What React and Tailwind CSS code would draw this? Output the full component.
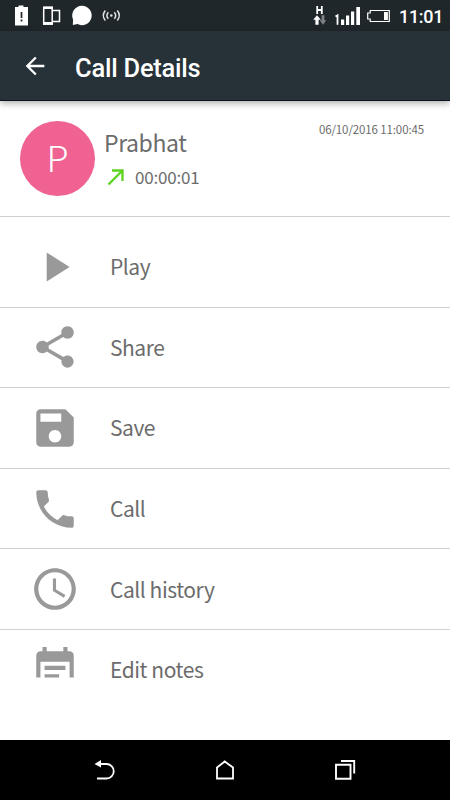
import clsx from 'clsx';

const actions = [
  { label: 'Play', path: 'M8 5v14l11-7z' },
  {
    label: 'Share',
    path: 'M18 16.08c-.76 0-1.44.3-1.96.77L8.91 12.7c.05-.23.09-.46.09-.7s-.04-.47-.09-.7l7.05-4.11c.54.5 1.25.81 2.04.81 1.66 0 3-1.34 3-3s-1.34-3-3-3-3 1.34-3 3c0 .24.04.47.09.7L8.04 9.81C7.5 9.31 6.79 9 6 9c-1.66 0-3 1.34-3 3s1.34 3 3 3c.79 0 1.5-.31 2.04-.81l7.12 4.16c-.05.21-.08.43-.08.65 0 1.61 1.31 2.92 2.92 2.92s2.92-1.31 2.92-2.92-1.31-2.92-2.92-2.92z',
  },
  {
    label: 'Save',
    path: 'M17 3H5c-1.11 0-2 .9-2 2v14c0 1.1.89 2 2 2h14c1.1 0 2-.9 2-2V7l-4-4zm-5 16c-1.66 0-3-1.34-3-3s1.34-3 3-3 3 1.34 3 3-1.34 3-3 3zm3-10H5V5h10v4z',
  },
  {
    label: 'Call',
    path: 'M6.62 10.79c1.44 2.83 3.76 5.14 6.59 6.59l2.2-2.2c.27-.27.67-.36 1.02-.24 1.12.37 2.33.57 3.57.57.55 0 1 .45 1 1V20c0 .55-.45 1-1 1-9.39 0-17-7.61-17-17 0-.55.45-1 1-1h3.5c.55 0 1 .45 1 1 0 1.25.2 2.45.57 3.57.11.35.03.74-.25 1.02l-2.2 2.2z',
  },
  {
    label: 'Call history',
    path: 'M11.99 2C6.47 2 2 6.48 2 12s4.47 10 9.99 10C17.52 22 22 17.52 22 12S17.52 2 11.99 2zM12 20c-4.42 0-8-3.58-8-8s3.58-8 8-8 8 3.58 8 8-3.58 8-8 8zm.5-13H11v6l5.25 3.15.75-1.23-4.5-2.67z',
  },
  {
    label: 'Edit notes',
    path: 'M5 15.6H3V5c0-1.1.9-2 2-2h1V1h2v2h8V1h2v2h1c1.1 0 2 .9 2 2v10.6h-2V8H5zM7 10h10v2H7zM7 14h7v1.6H7z',
  },
];

function StatusBar() {
  return (
    <div className="flex h-[31px] items-center justify-between bg-[#20272b] pl-[14px] pr-[7px] text-white">
      <div className="flex h-full items-center">
        <svg width="110" height="31" viewBox="0 0 110 31">
          <path d="M1 7h3.500V5.500h5V7H14v18.500H1z" fill="white" />
          <path d="M7.500 12v6M7.500 19.500v2" stroke="#20272b" strokeWidth="1.700" />
          <path d="M29.700 7.500h8.500V10M38.200 22v2h-8.500V7" fill="none" stroke="white" strokeWidth="1.500" />
          <path d="M29 6.500h10v2.500h-10zM29 22h10v2.800h-10z" fill="white" />
          <path d="M38.200 10.500h7.300v11h-7.300z" fill="#20272b" stroke="white" strokeWidth="1.500" />
          <path d="M68 5.800a9.700 9.700 0 1 1-4.500 18.300l-4.700.9.300-5.300A9.700 9.700 0 0 1 68 5.800z" fill="white" />
          <g fill="none" stroke="#e2e4e5" strokeWidth="1.500">
            <path d="M91.300 10.500q-4 5 0 10M94.300 12.200q-2.800 3.300 0 6.600M103.300 10.500q4 5 0 10M100.300 12.200q2.800 3.300 0 6.600" />
          </g>
          <circle cx="97.300" cy="15.500" r="1.300" fill="#e2e4e5" />
        </svg>
      </div>
      <div className="flex h-full items-center gap-[9px]">
        <svg width="79" height="31" viewBox="312 0 79 31">
          <path d="M318.200 6v8M322.800 6v8M318.200 10h4.600" fill="none" stroke="white" strokeWidth="1.800" />
          <path d="M318 15.200l3.800 4.500h-2.200v5h-3.200v-5h-2.200z" fill="white" />
          <path d="M324 24.700l3.300-4.500h-1.900v-5h-2.800v5h-1.900z" fill="#7c8285" />
          <path d="M336.500 16.500l2-1.200v9.500" fill="none" stroke="white" strokeWidth="1.800" />
          <path d="M342 19.500h3.200V25H342zM347 15.500h3.200V25H347zM352 11.500h3.200V25H352zM357.300 7h3.700v18h-3.700z" fill="white" />
          <path d="M371.200 10.500h19.100v11h-19.100v-2.500h-2.500v-6h2.500z" fill="none" stroke="white" strokeWidth="1.200" />
          <path d="M385 12h3.900v8H385z" fill="white" />
        </svg>
        <span className="w-[44px] whitespace-nowrap pt-[2px] text-[18px] font-medium leading-[31px] tracking-[-0.300px]">11:01</span>
      </div>
    </div>
  );
}

function AppBar() {
  return (
    <div className="relative z-10 flex h-[70px] items-center border-b border-[#10131f] bg-[#263238] pl-[21px] text-white shadow-[0_2px_7px_rgba(0,0,0,0.35)]">
      <svg width="28" height="28" viewBox="0 0 24 24" fill="currentColor" className="mt-px">
        <path d="M20 11H7.830l5.590-5.590L12 4l-8 8 8 8 1.410-1.410L7.830 13H20v-2z" />
      </svg>
      <h1 className="ml-[26px] mt-[5px] text-[25.500px] font-medium leading-[30px] tracking-[-0.250px]">Call Details</h1>
    </div>
  );
}

function CallSummary() {
  return (
    <div className="flex h-[116px] border-b border-[#d0d0d0] pl-5 pr-[26px] pt-5 font-['Noto_Sans_CJK_SC','Noto_Sans',sans-serif] text-[#6c6c6c]">
      <div className="flex size-[75px] shrink-0 justify-center rounded-full bg-[#f06292] text-[36px] font-light leading-[70px] text-white">
        P
      </div>
      <div className="ml-[9px] flex-1">
        <div className="mt-[5px] text-[23px] leading-[32px] tracking-[-0.400px]">Prabhat</div>
        <div className="mt-[3px] flex h-[32px] items-center">
          <svg width="18" height="18" viewBox="0 0 18 18" fill="none" stroke="#5fd21f" strokeWidth="2.300" className="ml-[3px] mt-px">
            <path d="M1.500 15.500L15 2M5 1.500h10.500v10.500" />
          </svg>
          <span className="ml-[10px] text-[17px] leading-[32px] tracking-[-0.200px]">00:00:01</span>
        </div>
      </div>
      <div className="text-[11.500px] leading-[16px] tracking-[-0.120px]">06/10/2016 11:00:45</div>
    </div>
  );
}

function ActionRow({ action, last }) {
  return (
    <div
      className={clsx(
        "flex h-[80.6px] items-center border-b pl-[30px] font-['Noto_Sans_CJK_SC','Noto_Sans',sans-serif]",
        last ? 'border-transparent' : 'border-[#d0d0d0]'
      )}
    >
      <svg width="50" height="50" viewBox="0 0 24 24" fill="#999999">
        <path d={action.path} />
      </svg>
      <span className="mb-px ml-[30px] text-[21px] leading-[30px] tracking-[-0.450px] text-[#6c6c6c]">{action.label}</span>
    </div>
  );
}

function NavBar() {
  return (
    <div className="flex h-[60px] items-center justify-between bg-black px-[90px]">
      <svg width="30" height="30" viewBox="90 755 30 30" fill="none" stroke="white" strokeWidth="1.800">
        <path d="M99 764h7.500a7.200 7.200 0 0 1 0 14.500H97" />
        <path d="M94.500 764l6.500-4v7.500z" fill="white" stroke="none" />
      </svg>
      <svg width="30" height="30" viewBox="210 755 30 30" fill="none" stroke="white" strokeWidth="1.800">
        <path d="M217 767.500l7.700-6 8.300 6v11h-16z" />
      </svg>
      <svg width="30" height="30" viewBox="330 755 30 30" fill="none" stroke="white" strokeWidth="1.900">
        <path d="M336 764.700h14.500v14H336zM341 761h13.200v12.500" />
      </svg>
    </div>
  );
}

export default function App() {
  return (
    <div className="flex h-[800px] w-[450px] flex-col overflow-hidden bg-white font-[Roboto,sans-serif]">
      <StatusBar />
      <AppBar />
      <CallSummary />
      <div className="flex-1 pt-[10px]">
        {actions.map((action, i) => (
          <ActionRow key={action.label} action={action} last={i === actions.length - 1} />
        ))}
      </div>
      <NavBar />
    </div>
  );
}
